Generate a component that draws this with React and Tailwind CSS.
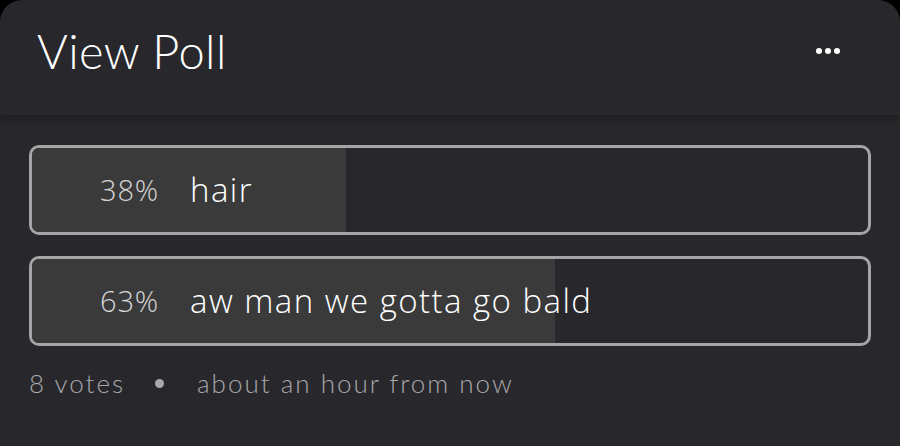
import React from 'react';

const options = [
    { id: 1, pct: 38, label: 'hair' },
    { id: 2, pct: 63, label: 'aw man we gotta go bald' },
];

const App = () => {
    return (
        <div className="w-[900px] h-[446px] bg-black overflow-hidden">
            <div className="h-full bg-[#28272b] rounded-t-[22px] flex flex-col">
                {/* Header */}
                <header className="h-[115px] shrink-0 flex items-center justify-between pl-[37px] pr-[60px] shadow-[0_4px_6px_rgba(0,0,0,0.25)] relative z-10">
                    <h1 className="text-[47px] text-white leading-none pb-[12px] font-['Lato',sans-serif] font-light tracking-[0.4px]">View Poll</h1>
                    <div className="flex gap-[3px] pb-[14px]">
                        <span className="w-[6px] h-[6px] rounded-full bg-white" />
                        <span className="w-[6px] h-[6px] rounded-full bg-white" />
                        <span className="w-[6px] h-[6px] rounded-full bg-white" />
                    </div>
                </header>

                {/* Options */}
                <div className="flex flex-col gap-[21px] px-[29px] pt-[30px]">
                    {options.map(opt => (
                        <div
                            key={opt.id}
                            className="relative h-[90px] rounded-[10px] border-[3px] border-[#a5a5a7] overflow-hidden"
                        >
                            <div
                                className="absolute inset-y-0 left-0 bg-[#3a3a3b]"
                                style={{ width: `${opt.pct - 0.5}%` }}
                            />
                            <div className="relative h-full flex items-center font-['Open_Sans',sans-serif]">
                                <span className="w-[127px] text-right text-[29px] text-[#d4d4d4] font-light tracking-[0.8px]">{opt.pct}%</span>
                                <span className="ml-[31px] text-[33px] text-white font-light tracking-[1.45px]">{opt.label}</span>
                            </div>
                        </div>
                    ))}
                </div>

                {/* Footer */}
                <div className="flex items-center px-[29px] pt-[18px] text-[26px] text-[#a9a8ac] font-['Lato',sans-serif] font-light tracking-[2px]">
                    <span>8 votes</span>
                    <span className="w-[9px] h-[9px] rounded-full bg-[#a9a8ac] ml-[30px] mr-[33px]" />
                    <span>about an hour from now</span>
                </div>
            </div>
        </div>
    );
};

export default App;
